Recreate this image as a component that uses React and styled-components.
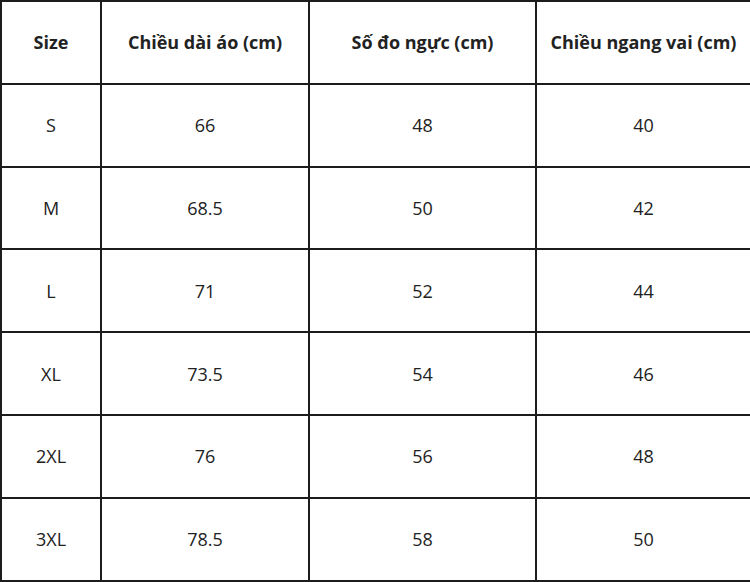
import React from 'react';
import styled, { createGlobalStyle } from 'styled-components';

const GlobalStyle = createGlobalStyle`
  html, body {
    margin: 0;
    padding: 0;
    background: #fff;
  }
  body {
    font-family: "Open Sans", Lato, sans-serif;
    color: #222;
  }
`;

const columns = [
  { label: 'Size', width: 100 },
  { label: 'Chiều dài áo (cm)', width: 208 },
  { label: 'Số đo ngực (cm)', width: 227 },
  { label: 'Chiều ngang vai (cm)', width: 215 },
];

const rows = [
  ['S', '66', '48', '40'],
  ['M', '68.5', '50', '42'],
  ['L', '71', '52', '44'],
  ['XL', '73.5', '54', '46'],
  ['2XL', '76', '56', '48'],
  ['3XL', '78.5', '58', '50'],
];

function App() {
  return (
    <>
      <GlobalStyle />
      <Table>
        <colgroup>
          {columns.map((c) => (
            <col key={c.label} style={{ width: c.width }} />
          ))}
        </colgroup>
        <thead>
          <tr>
            {columns.map((c) => (
              <HeadCell key={c.label}>{c.label}</HeadCell>
            ))}
          </tr>
        </thead>
        <tbody>
          {rows.map((r) => (
            <tr key={r[0]}>
              {r.map((v, i) => (
                <Cell key={i}>{v}</Cell>
              ))}
            </tr>
          ))}
        </tbody>
      </Table>
    </>
  );
}

const Table = styled.table`
  width: 750px;
  table-layout: fixed;
  border-collapse: collapse;
  tr {
    height: 82.8px;
  }
`;

const HeadCell = styled.th`
  border: 2px solid #1c1c1c;
  text-align: center;
  vertical-align: middle;
  font-size: 18px;
  font-weight: 700;
  padding: 0 4px;
  white-space: nowrap;
`;

const Cell = styled.td`
  border: 2px solid #1c1c1c;
  text-align: center;
  vertical-align: middle;
  font-size: 18px;
  font-weight: 400;
  padding: 0 4px;
`;

export default App;
